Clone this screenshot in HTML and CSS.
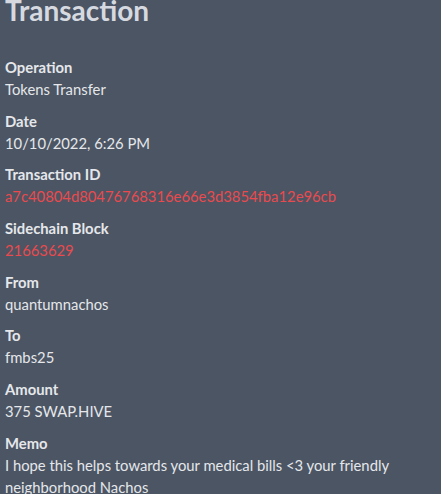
FILE: index.html
```html
<!DOCTYPE html>
<html>
<head>
<meta charset="utf-8">
<link rel="stylesheet" href="styles.css">
</head>
<body>
<div class="page">
  <h1 class="title">Transaction</h1>
  <dl class="fields">
    <div class="field"><dt class="label">Operation</dt><dd class="value">Tokens Transfer</dd></div>
    <div class="field"><dt class="label">Date</dt><dd class="value">10/10/2022, 6:26 PM</dd></div>
    <div class="field"><dt class="label">Transaction ID</dt><dd class="value link">a7c40804d80476768316e66e3d3854fba12e96cb</dd></div>
    <div class="field"><dt class="label">Sidechain Block</dt><dd class="value link">21663629</dd></div>
    <div class="field"><dt class="label">From</dt><dd class="value">quantumnachos</dd></div>
    <div class="field"><dt class="label">To</dt><dd class="value">fmbs25</dd></div>
    <div class="field"><dt class="label">Amount</dt><dd class="value">375 SWAP.HIVE</dd></div>
    <div class="field"><dt class="label">Memo</dt><dd class="value">I hope this helps towards your medical bills &lt;3 your friendly neighborhood Nachos</dd></div>
  </dl>
</div>
</body>
</html>
```
FILE: styles.css
```css
html, body {
  margin: 0;
  padding: 0;
  background: #4b5563;
  overflow: hidden;
}
.page {
  font-family: Lato, "Noto Sans", sans-serif;
  color: #e5e7eb;
  padding: 0 5px;
  width: 410px;
}
.title {
  margin: -6px 0 0 0;
  font-size: 28px;
  line-height: 32px;
  font-weight: 700;
  color: #d6dae0;
}
.fields {
  margin: 30px 0 0 0;
  display: flex;
  flex-direction: column;
  gap: 9.7px;
}
.field {
  display: flex;
  flex-direction: column;
}
.label {
  font-size: 14.8px;
  line-height: 22px;
  font-weight: 700;
  color: #e5e7eb;
}
.value {
  margin: 0;
  font-size: 14.8px;
  line-height: 22px;
  color: #e5e7eb;
}
.link {
  color: #ea4a4e;
}
```
